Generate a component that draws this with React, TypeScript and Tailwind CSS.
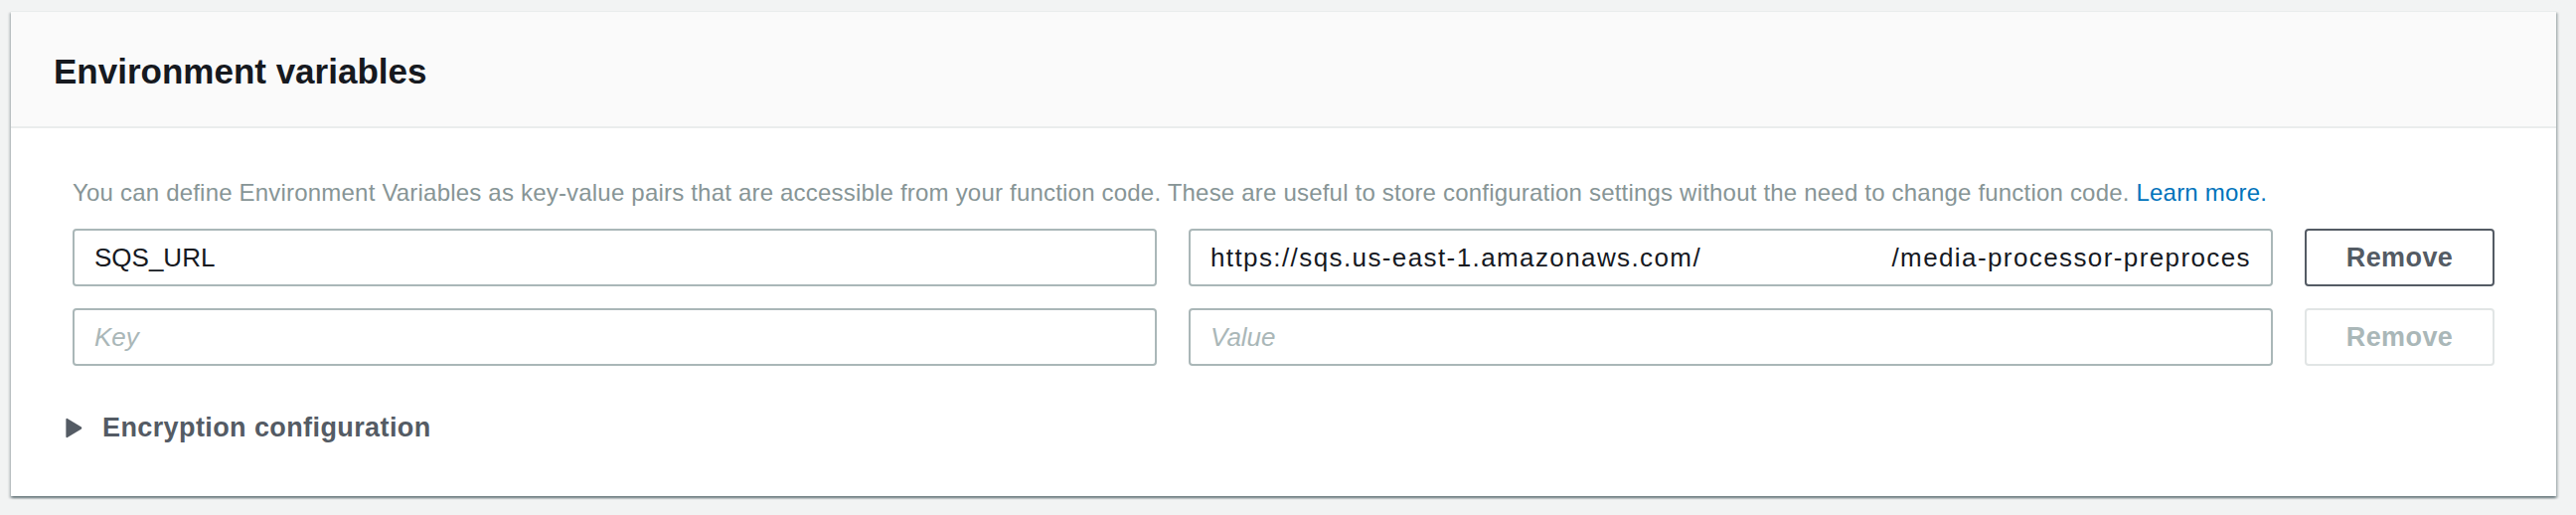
import React from 'react';

const font = { fontFamily: '"Liberation Sans", Arial, sans-serif' };

function TextBox({ value, placeholder }: { value?: React.ReactNode; placeholder?: string }) {
  return (
    <div className="flex-1 h-[58px] min-w-0 flex items-center px-[20px] border-2 border-[#aab7b8] rounded-[4px] bg-white overflow-hidden text-[26px]">
      {value ? (
        value
      ) : (
        <span className="italic text-[#aab7b8]">{placeholder}</span>
      )}
    </div>
  );
}

function RemoveButton({ disabled }: { disabled?: boolean }) {
  return (
    <button
      className={
        disabled
          ? 'w-[191px] h-[58px] shrink-0 border-2 border-[#e1e5e5] rounded-[4px] bg-white text-[27px] font-bold text-[#aab7b8] tracking-[0.4px]'
          : 'w-[191px] h-[58px] shrink-0 border-2 border-[#545b64] rounded-[4px] bg-white text-[27px] font-bold text-[#545b64] tracking-[0.4px]'
      }
    >
      Remove
    </button>
  );
}

export default function App() {
  return (
    <div className="w-[2592px] h-[518px] bg-[#f2f3f3] pt-[11px] pl-[11px] pr-[20px]" style={font}>
      <div className="bg-white border-t border-[#eaeded] shadow-[0_2px_2px_0_rgba(0,28,36,0.35),2px_2px_2px_0_rgba(0,28,36,0.2),-2px_2px_2px_0_rgba(0,28,36,0.15)]">
        <div className="h-[117px] pt-[4px] px-[43px] flex items-center bg-[#fafafa] border-b-2 border-[#eaeded]">
          <h2 className="text-[35px] font-bold text-[#16191f] leading-[42px]">Environment variables</h2>
        </div>

        <div className="pt-[48px] pb-[51px] px-[62px]">
          <p className="text-[24px] leading-[34px] text-[#879596] tracking-[0.2px] whitespace-nowrap">
            You can define Environment Variables as key-value pairs that are accessible from your function code. These
            are useful to store configuration settings without the need to change function code.{' '}
            <a className="text-[#0073bb]">Learn more.</a>
          </p>

          <div className="mt-[19px] flex flex-col gap-[22px]">
            <div className="flex gap-[32px]">
              <TextBox value={<span className="text-[#16191f]">SQS_URL</span>} />
              <TextBox
                value={
                  <div className="flex-1 flex justify-between text-[#16191f] whitespace-nowrap tracking-[1.4px]">
                    <span>https://sqs.us-east-1.amazonaws.com/</span>
                    <span>/media-processor-preproces</span>
                  </div>
                }
              />
              <RemoveButton />
            </div>
            <div className="flex gap-[32px]">
              <TextBox placeholder="Key" />
              <TextBox placeholder="Value" />
              <RemoveButton disabled />
            </div>
          </div>

          <div className="mt-[44px] -ml-[7px] flex items-center gap-[20px] leading-[36px]">
            <svg width="17" height="21" viewBox="0 0 17 21" className="shrink-0">
              <path d="M1.8 0.9 L15.9 9.4 Q16.8 10.5 15.9 11.6 L1.8 20.1 Q0.4 20.6 0.4 19 L0.4 2 Q0.4 0.4 1.8 0.9 Z" fill="#545b64" />
            </svg>
            <span className="text-[27px] font-bold text-[#545b64] tracking-[0.4px]">Encryption configuration</span>
          </div>
        </div>
      </div>
    </div>
  );
}
